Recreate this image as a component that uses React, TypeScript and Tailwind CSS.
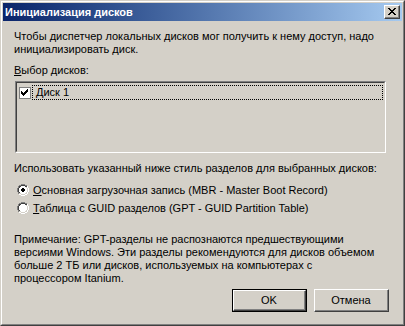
import React from 'react';

const font = { fontFamily: '"Liberation Sans", Arial, sans-serif' };

const CloseGlyph = () => (
  <svg width="8" height="7" viewBox="0 0 8 7" shapeRendering="crispEdges">
    <path d="M0 0h2v1h-2zM6 0h2v1h-2zM1 1h2v1h-2zM5 1h2v1h-2zM2 2h4v1h-4zM3 3h2v1h-2zM2 4h4v1h-4zM1 5h2v1h-2zM5 5h2v1h-2zM0 6h2v1h-2zM6 6h2v1h-2z" fill="#000" />
  </svg>
);

const Radio = ({ checked }: { checked: boolean }) => (
  <svg width="12" height="12" viewBox="0 0 12 12" shapeRendering="crispEdges">
    <path d="M4 0h4v1h-4zM2 1h2v1h-2zM8 1h2v1h-2zM1 2h1v2h-1zM0 4h1v4h-1zM1 8h1v2h-1z" fill="#808080" />
    <path d="M4 1h4v1h-4zM2 2h2v1h-2zM8 2h2v1h-2zM2 3h1v1h-1zM1 4h1v4h-1zM2 8h1v1h-1z" fill="#404040" />
    <path d="M10 2h1v2h-1zM11 4h1v4h-1zM10 8h1v2h-1zM8 10h2v1h-2zM2 10h2v1h-2zM4 11h4v1h-4z" fill="#ffffff" />
    <path d="M9 3h1v1h-1zM10 4h1v4h-1zM9 8h1v1h-1zM8 9h2v1h-2zM2 9h2v1h-2zM4 10h4v1h-4z" fill="#d4d0c8" />
    <path d="M4 2h4v1h-4zM3 3h6v1h-6zM2 4h8v4h-8zM3 8h6v1h-6zM4 9h4v1h-4z" fill="#ffffff" />
    {checked ? <path d="M5 4h2v1h-2zM4 5h4v2h-4zM5 7h2v1h-2z" fill="#000" /> : null}
  </svg>
);

const CheckBox = () => (
  <div className="flex h-[12px] w-[12px] items-center justify-center border border-[#808080] bg-white">
    <svg width="8" height="7" viewBox="0 0 8 7" shapeRendering="crispEdges">
      <path d="M6 0h1v3h-1zM5 1h1v3h-1zM4 2h1v3h-1zM3 3h1v3h-1zM2 4h1v3h-1zM1 3h1v3h-1zM0 2h1v3h-1z" fill="#000" />
    </svg>
  </div>
);

const Button = ({ label, isDefault }: { label: string; isDefault?: boolean }) => (
  <div className={`h-[23px] w-[75px] ${isDefault ? 'border border-black' : ''}`}>
    <div className="h-full w-full border-t border-l border-b border-r border-t-white border-l-white border-b-[#404040] border-r-[#404040]">
      <div className="flex h-full w-full items-center justify-center border-r border-b border-[#808080] text-[11px] text-black">
        {label}
      </div>
    </div>
  </div>
);

export default function App() {
  return (
    <div className="h-[326px] w-[405px] select-none" style={font}>
      <div className="h-full w-full border border-t-[#d4d0c8] border-l-[#d4d0c8] border-b-[#404040] border-r-[#404040]">
        <div className="h-full w-full border border-t-white border-l-white border-b-[#808080] border-r-[#808080] bg-[#d4d0c8] p-px">
          <div className="flex h-[18px] items-center justify-between bg-gradient-to-r from-[#0a246a] to-[#a6caf0] pl-[2px] pr-[2px]">
            <span className="text-[11px] font-bold leading-[18px] text-white">Инициализация дисков</span>
            <div className="h-[14px] w-[16px] border border-t-white border-l-white border-b-[#404040] border-r-[#404040] bg-[#d4d0c8]">
              <div className="flex h-full w-full items-center justify-center border-r border-b border-[#808080]">
                <CloseGlyph />
              </div>
            </div>
          </div>

          <div className="flex flex-col pl-[11px] pr-[13px] text-[11px] leading-[13px] text-black">
            <p className="mt-[9px]">
              Чтобы диспетчер локальных дисков мог получить к нему доступ, надо
              <br />
              инициализировать диск.
            </p>
            <p className="mt-[8px]">
              <u>В</u>ыбор дисков:
            </p>
            <div className="ml-px mt-[4px] h-[72px] w-[371px] border border-t-[#808080] border-l-[#808080] border-b-white border-r-white">
              <div className="h-full w-full border border-t-[#404040] border-l-[#404040] border-b-[#d4d0c8] border-r-[#d4d0c8] bg-[#d4d0c8] pt-[2px] pl-[2px] pr-px">
                <div className="flex h-[15px] items-center">
                  <CheckBox />
                  <div className="ml-[1px] flex h-[15px] flex-1 items-center border border-dotted border-black pl-[3px]">
                    Диск 1
                  </div>
                </div>
              </div>
            </div>
            <p className="mt-[9px]">Использовать указанный ниже стиль разделов для выбранных дисков:</p>
            <div className="mt-[6px] flex h-[18px] items-center pl-[3px]">
              <Radio checked />
              <span className="ml-[4px]">
                <u>О</u>сновная загрузочная запись (MBR - Master Boot Record)
              </span>
            </div>
            <div className="flex h-[18px] items-center pl-[3px]">
              <Radio checked={false} />
              <span className="ml-[4px]">
                <u>Т</u>аблица с GUID разделов (GPT - GUID Partition Table)
              </span>
            </div>
            <p className="mt-[16px]">
              Примечание: GPT-разделы не распознаются предшествующими
              <br />
              версиями Windows. Эти разделы рекомендуются для дисков объемом
              <br />
              больше 2 ТБ или дисков, используемых на компьютерах с
              <br />
              процессором Itanium.
            </p>
            <div className="mt-[4px] flex justify-end gap-[7px]">
              <Button label="OK" isDefault />
              <Button label="Отмена" />
            </div>
          </div>
        </div>
      </div>
    </div>
  );
}
